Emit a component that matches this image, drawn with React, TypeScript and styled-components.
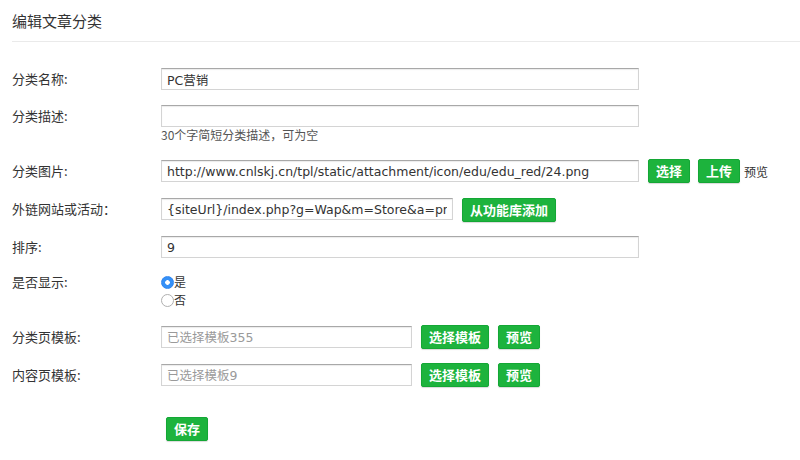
import { createGlobalStyle, styled } from "styled-components";

const GlobalStyle = createGlobalStyle`
  html, body {
    margin: 0;
    padding: 0;
    background: #fff;
  }
  body {
    font-family: "Noto Sans CJK SC", "DejaVu Sans", sans-serif;
    color: #333;
  }
`;

export default function App(): JSX.Element {
  return (
    <>
      <GlobalStyle />
      <Page>
        <Header>
          <Title>编辑文章分类</Title>
        </Header>
        <Form>
          <Row $mt={26}>
            <Label>分类名称:</Label>
            <Field>
              <TextInput $width={478} defaultValue="PC营销" />
            </Field>
          </Row>
          <Row $mt={15}>
            <Label>分类描述:</Label>
            <Stack>
              <TextInput $width={478} defaultValue="" />
              <Hint>30个字简短分类描述，可为空</Hint>
            </Stack>
          </Row>
          <Row $mt={17}>
            <Label $lh={24}>分类图片:</Label>
            <Field>
              <TextInput
                $width={478}
                defaultValue="http://www.cnlskj.cn/tpl/static/attachment/icon/edu/edu_red/24.png"
              />
              <Button $ml={9}>选择</Button>
              <Button $ml={8}>上传</Button>
              <SmallText>预览</SmallText>
            </Field>
          </Row>
          <Row $mt={15}>
            <Label>外链网站或活动：</Label>
            <Field $top>
              <TextInput
                $width={292}
                defaultValue="{siteUrl}/index.php?g=Wap&m=Store&a=products&token=abc"
              />
              <Button $ml={9}>从功能库添加</Button>
            </Field>
          </Row>
          <Row $mt={14}>
            <Label>排序:</Label>
            <Field>
              <TextInput $width={478} defaultValue="9" />
            </Field>
          </Row>
          <Row $mt={15}>
            <Label $lh={18}>是否显示:</Label>
            <Stack>
              <RadioLine>
                <Radio type="radio" name="show" defaultChecked />是
              </RadioLine>
              <RadioLine>
                <Radio type="radio" name="show" />否
              </RadioLine>
            </Stack>
          </Row>
          <Row $mt={16}>
            <Label $lh={24}>分类页模板:</Label>
            <Field>
              <TextInput $width={251} readOnly placeholder="已选择模板355" />
              <Button $ml={9}>选择模板</Button>
              <Button $ml={9}>预览</Button>
            </Field>
          </Row>
          <Row $mt={14}>
            <Label $lh={24}>内容页模板:</Label>
            <Field>
              <TextInput $width={251} readOnly placeholder="已选择模板9" />
              <Button $ml={9}>选择模板</Button>
              <Button $ml={9}>预览</Button>
            </Field>
          </Row>
          <Row $mt={30}>
            <span />
            <Field>
              <Button $ml={5}>保存</Button>
            </Field>
          </Row>
        </Form>
      </Page>
    </>
  );
}

const Page = styled.div`
  width: 800px;
  min-height: 460px;
`;

const Header = styled.div`
  margin-left: 12px;
  height: 41px;
  border-bottom: 1px solid #eaeaea;
  display: flex;
  align-items: center;
`;

const Title = styled.h1`
  margin: 0;
  font-size: 15px;
  font-weight: normal;
  color: #333;
`;

const Form = styled.div`
  padding-left: 12px;
  display: flex;
  flex-direction: column;
`;

const Row = styled.div<{ $mt: number }>`
  display: grid;
  grid-template-columns: 149px 1fr;
  align-items: start;
  margin-top: ${(p) => p.$mt}px;
`;

const Label = styled.div<{ $lh?: number }>`
  font-size: 13px;
  line-height: ${(p) => p.$lh ?? 22}px;
  color: #333;
  white-space: nowrap;
`;

const Field = styled.div<{ $top?: boolean }>`
  display: flex;
  align-items: ${(p) => (p.$top ? "flex-start" : "center")};
`;

const Stack = styled.div`
  display: flex;
  flex-direction: column;
`;

const TextInput = styled.input<{ $width: number }>`
  box-sizing: border-box;
  width: ${(p) => p.$width}px;
  height: 22px;
  margin: 0;
  padding: 0 5px;
  border: 1px solid #d4d4d4;
  border-top-color: #a8a8a8;
  box-shadow: inset 0 1px 1px rgba(0, 0, 0, 0.08);
  font-family: "DejaVu Sans", "Noto Sans CJK SC", sans-serif;
  font-size: 12.5px;
  color: #333;
  background: #fff;
  outline: none;

  &::placeholder {
    color: #9a9a9a;
  }
`;

const Hint = styled.div`
  font-size: 12px;
  line-height: 15px;
  color: #555;
`;

const Button = styled.button<{ $ml: number }>`
  box-sizing: border-box;
  height: 24px;
  margin: 0 0 0 ${(p) => p.$ml}px;
  padding: 0 7px;
  border: 1px solid #14a735;
  border-radius: 2px;
  background: #1db33d;
  box-shadow: 0 1px 1px rgba(0, 0, 0, 0.15);
  color: #fff;
  font-family: "Noto Sans CJK SC", sans-serif;
  font-size: 13px;
  font-weight: bold;
  line-height: 22px;
  cursor: pointer;
`;

const SmallText = styled.span`
  margin-left: 4px;
  font-size: 12px;
  color: #333;
`;

const RadioLine = styled.label`
  display: flex;
  align-items: center;
  height: 18px;
  font-size: 12px;
  line-height: 18px;
  color: #333;
`;

const Radio = styled.input`
  appearance: none;
  box-sizing: border-box;
  width: 13px;
  height: 13px;
  margin: 0;
  border-radius: 50%;
  border: 1px solid #b0b0b0;
  background: #fff;

  &:checked {
    border-color: #2f86f0;
    background: radial-gradient(circle, #fff 0 2px, #3590f7 2.6px);
  }
`;
